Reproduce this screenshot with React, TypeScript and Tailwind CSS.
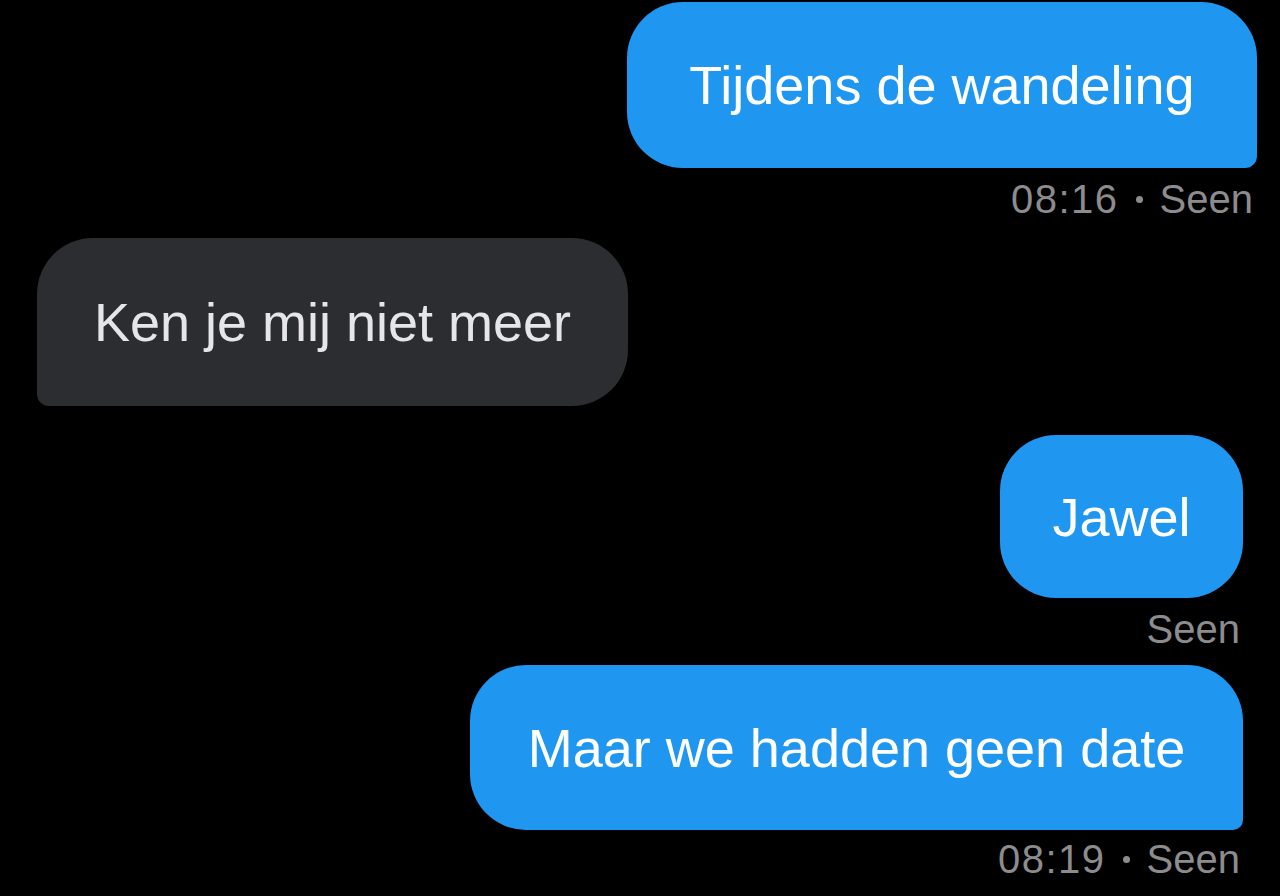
import React from 'react';

// --- DATA: THE THREAD ---
type Msg = {
  text: string;
  mine: boolean;
  box: string;
  time?: string;
  metaBox?: string;
};

const THREAD: Msg[] = [
  {
    text: "Tijdens de wandeling",
    mine: true,
    box: "mt-[2px] mr-[23px] w-[630px] h-[166px] rounded-[56px] rounded-br-[12px]",
    time: "08:16",
    metaBox: "mt-[8px] mr-[27px]",
  },
  {
    text: "Ken je mij niet meer",
    mine: false,
    box: "mt-[16px] ml-[37px] w-[591px] h-[168px] rounded-[56px] rounded-bl-[12px]",
  },
  {
    text: "Jawel",
    mine: true,
    box: "mt-[29px] mr-[37px] w-[243px] h-[163px] rounded-[56px]",
    metaBox: "mt-[8px] mr-[40px]",
  },
  {
    text: "Maar we hadden geen date",
    mine: true,
    box: "mt-[13px] mr-[37px] w-[773px] h-[165px] rounded-[56px] rounded-br-[10px]",
    time: "08:19",
    metaBox: "mt-[6px] mr-[40px]",
  },
];

export default function App() {
  return (
    <div className="w-[1280px] h-[896px] bg-black overflow-hidden flex flex-col font-['Liberation_Sans',Arial,sans-serif]">
      {THREAD.map((m, i) => (
        <div key={i} className={m.mine ? "flex flex-col items-end" : "flex flex-col items-start"}>
          <div
            className={
              m.mine
                ? `${m.box} bg-[#1f97f0] text-white flex items-center justify-center`
                : `${m.box} bg-[#2b2d30] text-[#e6e6e8] flex items-center justify-center`
            }
          >
            <span className="text-[54px] leading-none">{m.text}</span>
          </div>
          {m.metaBox && (
            <div className={`${m.metaBox} flex items-center text-[40px] leading-[46px] text-[#8c8c8e]`}>
              {m.time && (
                <>
                  <span className="tracking-[1.5px]">{m.time}</span>
                  <span className="mx-[17px] w-[7px] h-[7px] rounded-full bg-[#8c8c8e]" />
                </>
              )}
              <span>Seen</span>
            </div>
          )}
        </div>
      ))}
    </div>
  );
}
